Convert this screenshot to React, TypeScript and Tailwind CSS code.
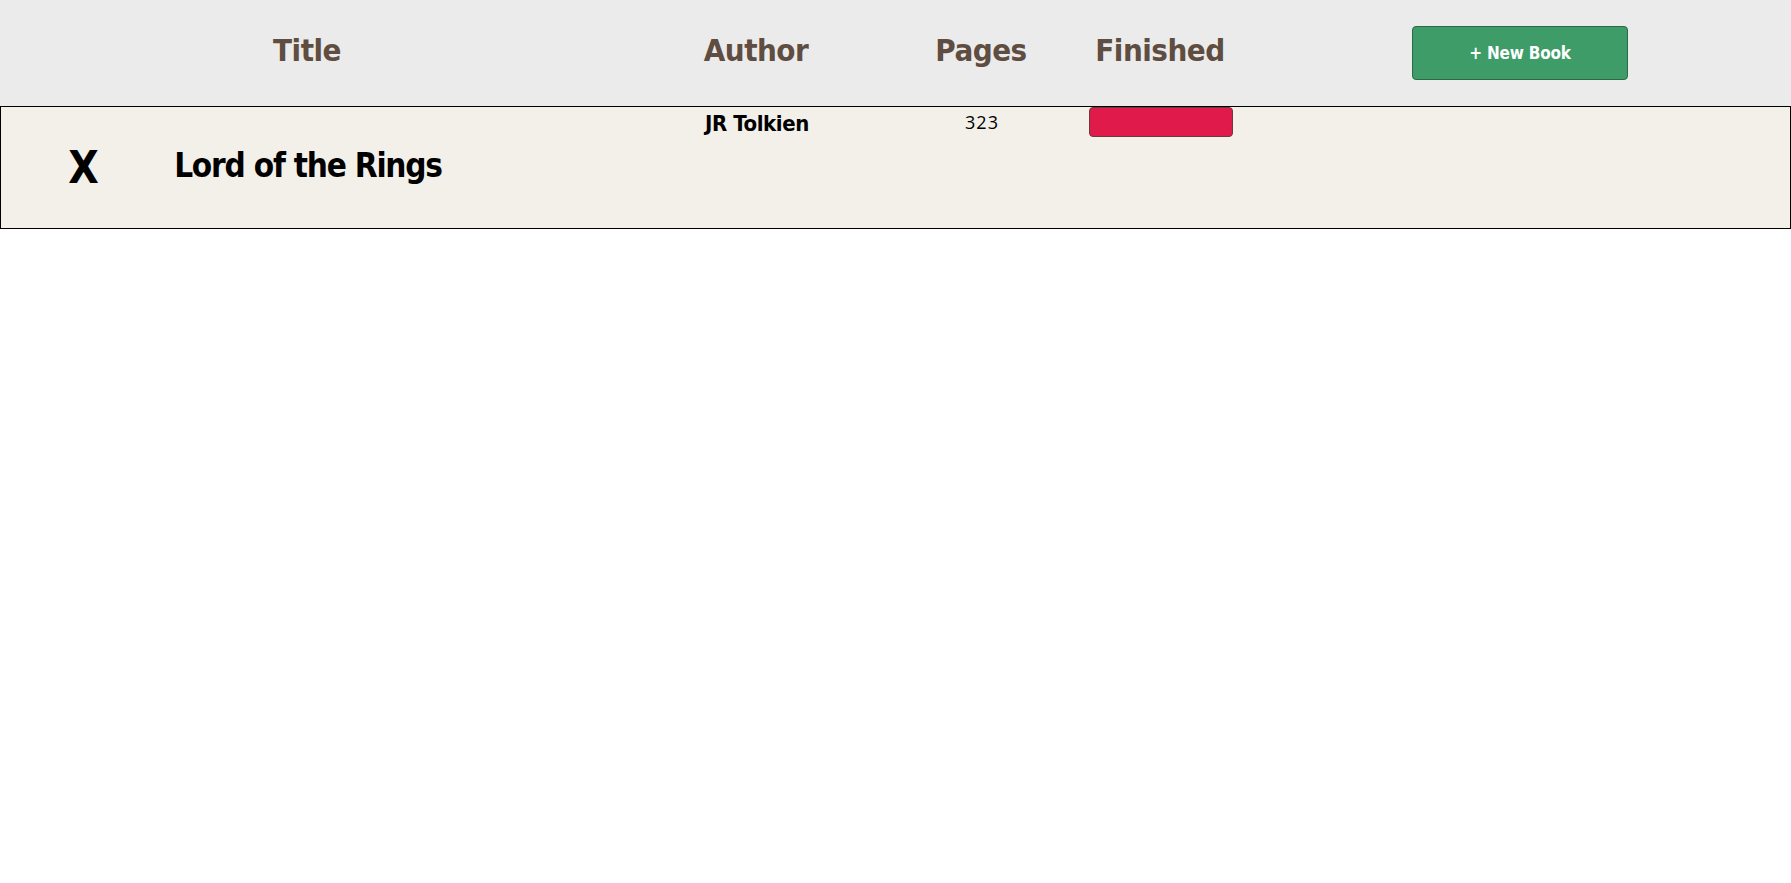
import React from 'react';

const narrow = { fontFamily: '"DejaVu Sans Condensed", Roboto, sans-serif' };

export default function App() {
  const books = [{ title: 'Lord of the Rings', author: 'JR Tolkien', pages: 323, finished: false }];

  return (
    <div className="min-h-screen w-full bg-white font-stretch-condensed" style={narrow}>
      {/* header */}
      <div className="flex h-[106px] items-center bg-[#ebebeb] font-bold tracking-[-0.5px] text-[#5e4d40]">
        <div className="w-[165px]" />
        <div className="w-[284px] pb-[5px] text-center text-[31px]">Title</div>
        <div className="ml-[231px] w-[152px] pb-[5px] text-center text-[31px]">Author</div>
        <div className="ml-[74px] w-[150px] pb-[5px] text-center text-[31px]">Pages</div>
        <div className="ml-[29px] w-[150px] pb-[5px] text-center text-[31px]">Finished</div>
        <button className="ml-[177px] h-[54px] w-[216px] rounded-[4px] border border-[#2a6b45] bg-[#3d9c68] pt-[2px] text-[17px] font-bold tracking-[-0.2px] text-white">
          + New Book
        </button>
      </div>

      {/* rows */}
      {books.map((b) => (
        <div key={b.title} className="flex h-[123px] border border-black bg-[#f3f0ea]">
          <div className="flex w-[165px] items-center justify-center text-[44px] font-bold text-black">X</div>
          <div className="flex w-[284px] items-center justify-center whitespace-nowrap pb-[4px] text-[33px] font-bold tracking-[-1.2px] text-black">
            {b.title}
          </div>
          <div className="ml-[231px] w-[152px] text-center text-[22px] font-bold tracking-[-0.4px] text-black">{b.author}</div>
          <div
            className="ml-[74px] w-[150px] pt-[2px] text-center text-[18px] tracking-[1px] text-black font-stretch-normal"
            style={{ fontFamily: '"Open Sans", sans-serif' }}
          >
            {b.pages}
          </div>
          <div className="ml-[29px] flex w-[150px] justify-center">
            <div className="h-[30px] w-[144px] rounded-[4px] border border-[#6b3b3b] bg-[#e01b4c]" />
          </div>
        </div>
      ))}
    </div>
  );
}
